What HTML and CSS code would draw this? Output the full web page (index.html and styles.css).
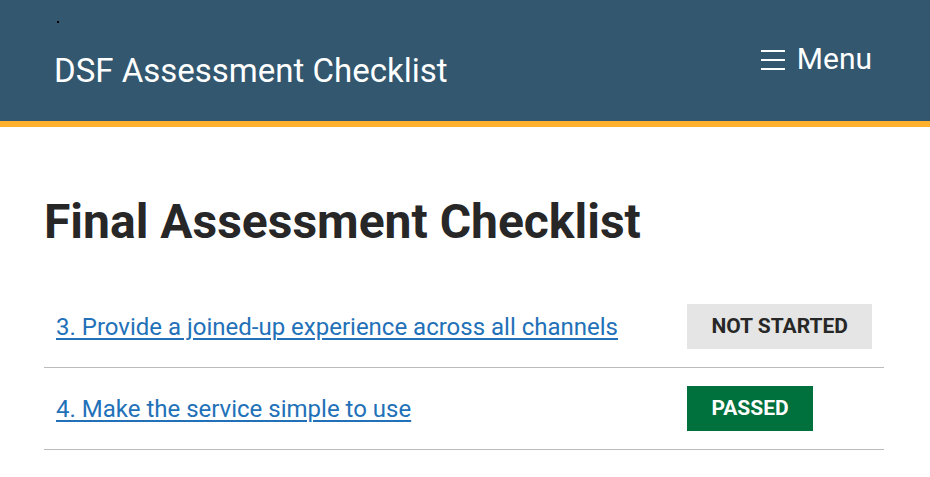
FILE: index.html
```html
<!DOCTYPE html>
<html lang="en">
<head>
<meta charset="utf-8">
<title>DSF Assessment Checklist</title>
<link rel="stylesheet" href="styles.css">
</head>
<body>
<header class="site-header">
  <div class="header-inner">
    <div class="brand">
      <span class="dot"></span>
      <a class="service-name" href="#">DSF Assessment Checklist</a>
    </div>
    <button class="menu-btn" type="button">
      <svg class="menu-icon" width="24" height="20" viewBox="0 0 24 20" aria-hidden="true">
        <rect x="0" y="1" width="24" height="2" fill="#fff"/>
        <rect x="0" y="10" width="24" height="2" fill="#fff"/>
        <rect x="0" y="19" width="24" height="2" fill="#fff"/>
      </svg>
      <span>Menu</span>
    </button>
  </div>
</header>
<main class="main">
  <h1 class="title">Final Assessment Checklist</h1>
  <table class="checklist">
    <tbody>
      <tr>
        <td class="item"><a href="#">3. Provide a joined-up experience across all channels</a></td>
        <td class="status"><strong class="tag tag-grey">Not started</strong></td>
      </tr>
      <tr>
        <td class="item"><a href="#">4. Make the service simple to use</a></td>
        <td class="status"><strong class="tag tag-green">Passed</strong></td>
      </tr>
      <tr>
        <td class="item"><a href="#">5. Make sure everyone can use the digital service</a></td>
        <td class="status"><span class="tag tag-plain">Cannot start yet</span></td>
      </tr>
    </tbody>
  </table>
</main>
</body>
</html>
```
FILE: styles.css
```css
* { box-sizing: border-box; }
html, body { margin: 0; padding: 0; }
body {
  font-family: Roboto, "Liberation Sans", Arial, sans-serif;
  color: #272727;
  background: #fff;
}
.site-header {
  background: #32576f;
  border-bottom: 6px solid #ffb12e;
  height: 127px;
}
.header-inner {
  display: flex;
  justify-content: space-between;
  align-items: flex-start;
  padding: 0 58px 0 54px;
}
.brand {
  display: flex;
  flex-direction: column;
  padding-top: 21px;
}
.dot {
  display: block;
  width: 2px;
  height: 2px;
  background: #000;
  margin-left: 3px;
}
.service-name {
  color: #fff;
  text-decoration: none;
  font-size: 33px;
  line-height: 38px;
  margin-top: 29px;
}
.menu-btn {
  display: flex;
  align-items: center;
  gap: 12px;
  background: none;
  border: 0;
  padding: 0;
  margin-top: 42px;
  color: #fff;
  font-family: inherit;
  font-size: 30px;
  line-height: 34px;
  cursor: pointer;
}
.menu-icon { display: block; width: 24px; height: 22px; }
.main {
  padding: 0 46px 0 44px;
}
.title {
  margin: 67px 0 0;
  font-size: 48px;
  line-height: 56px;
  font-weight: 700;
  color: #272727;
  letter-spacing: 0;
}
.checklist {
  width: 100%;
  border-collapse: collapse;
  margin-top: 36px;
}
.checklist td {
  padding: 18px 12px;
  vertical-align: middle;
  border-bottom: 1px solid #bbbbbb;
}
.checklist tr:last-child td { border-bottom: 0; }
.item a {
  color: #2271b8;
  font-size: 24px;
  line-height: 28px;
  text-decoration: underline;
  text-underline-offset: 3px;
  text-decoration-thickness: 2px;
}
.status { width: 1px; white-space: nowrap; }
.tag {
  display: inline-block;
  height: 45px;
  line-height: 45px;
  padding: 0 24px;
  font-size: 21px;
  font-weight: 700;
  text-transform: uppercase;
  letter-spacing: 0;
}
.tag-grey { background: #e5e5e5; color: #272727; }
.tag-green { background: #00703c; color: #fff; }
.tag-plain {
  font-weight: 400;
  text-transform: none;
  color: #505a5f;
  padding: 0 0 0 24px;
  height: 37px;
  line-height: 37px;
  vertical-align: top;
}
```
